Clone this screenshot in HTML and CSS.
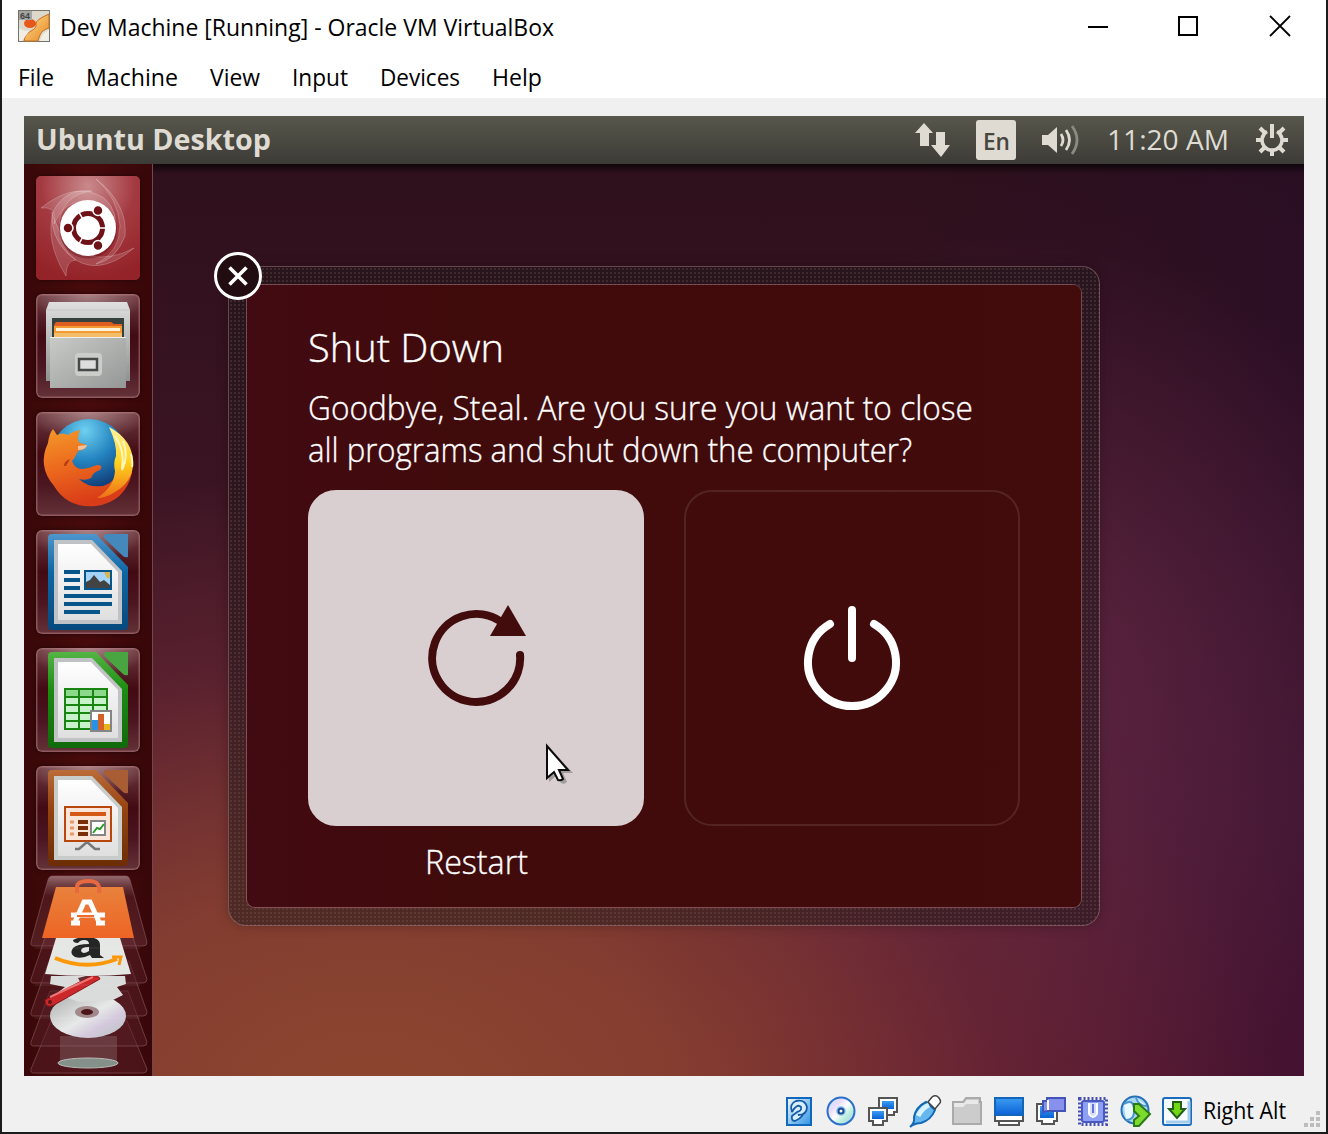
FILE: index.html
```html
<!DOCTYPE html>
<html lang="en">
<head>
<meta charset="utf-8">
<title>Dev Machine [Running] - Oracle VM VirtualBox</title>
<link rel="stylesheet" href="styles.css">
</head>
<body>
<div class="window">
  <header class="titlebar">
    <svg class="app-icon" width="32" height="32" viewBox="0 0 32 32">
      <defs><linearGradient id="pipe" x1="0" y1="0" x2="1" y2="1"><stop offset="0" stop-color="#ffe09a"/><stop offset="1" stop-color="#e8861c"/></linearGradient></defs>
      <rect x=".5" y=".5" width="31" height="31" fill="#ddd8cc" stroke="#77736a"/>
      <path d="M31 4v14q-7 2-9 7t-2 6H6q1-7 7-10t5-7 13-10z" fill="url(#pipe)" stroke="#c07420"/>
      <path d="M22 31q1-8 9-11v11z" fill="#f1eee6"/>
      <path d="M1 18q5 4 11 2l-8 11H1z" fill="#f1eee6"/>
      <ellipse cx="12" cy="13.500" rx="6" ry="4.500" fill="#e8571a"/>
      <rect x="1" y="1" width="13" height="9" fill="#a5a5a2"/>
      <text x="2" y="9" class="badge">64</text>
    </svg>
    <svg class="title segoe" width="500" height="40"><text x="1" y="26" textLength="494" lengthAdjust="spacingAndGlyphs">Dev Machine [Running] - Oracle VM VirtualBox</text></svg>
    <svg class="controls" width="204" height="24" viewBox="0 0 204 24" fill="none" stroke="#000" stroke-width="2">
      <path d="M2 13h20M93 3h18v18H93z"/><path d="M184 2l20 20M204 2l-20 20" stroke-width="1.800"/>
    </svg>
  </header>
  <nav class="menubar segoe">
    <svg width="36" height="38"><text x="0" y="26" textLength="36" lengthAdjust="spacingAndGlyphs">File</text></svg>
    <svg width="92" height="38"><text x="0" y="26" textLength="92" lengthAdjust="spacingAndGlyphs">Machine</text></svg>
    <svg width="50" height="38"><text x="0" y="26" textLength="50" lengthAdjust="spacingAndGlyphs">View</text></svg>
    <svg width="56" height="38"><text x="0" y="26" textLength="56" lengthAdjust="spacingAndGlyphs">Input</text></svg>
    <svg width="80" height="38"><text x="0" y="26" textLength="80" lengthAdjust="spacingAndGlyphs">Devices</text></svg>
    <svg width="50" height="38"><text x="0" y="26" textLength="50" lengthAdjust="spacingAndGlyphs">Help</text></svg>
  </nav>

  <main class="guest">
    <div class="panel">
      <svg class="panel-title" width="240" height="48"><text x="0" y="34" textLength="235" lengthAdjust="spacingAndGlyphs">Ubuntu Desktop</text></svg>
      <svg class="net" width="36" height="34" viewBox="0 0 36 34" fill="#dfdbd2"><path d="M9 0L18 10h-4v13H5V10H0zM21 9h9v13h5L26 34 16 22h5z"/></svg>
      <svg class="lang" width="40" height="40"><rect width="40" height="40" rx="3"/><text x="7" y="30" textLength="27" lengthAdjust="spacingAndGlyphs">En</text></svg>
      <svg class="sound" width="40" height="34" viewBox="0 0 40 34" fill="none" stroke="#dfdbd2" stroke-width="2.800"><path d="M0 12h6l9-8v26l-9-8H0z" fill="#dfdbd2" stroke="none"/><path d="M19 11q4 6 0 12M24 7q7 10 0 20"/><path d="M30 3q10 14 0 28" stroke="#8c8b82"/></svg>
      <svg class="clock" width="124" height="48"><text x="0" y="34" textLength="122" lengthAdjust="spacingAndGlyphs">11:20 AM</text></svg>
      <svg class="gear" width="34" height="34" viewBox="-17 -17 34 34" fill="none" stroke="#dfdbd2"><path d="M-5-8.500A10 10 0 1 0 5-8.500" stroke-width="3.600"/><path d="M0-16V-2M0 10v6M10 0h6M-10 0h-6M7 7l5 5M-7 7l-5 5M7-7l5-5M-7-7l-5-5" stroke-width="4"/></svg>
    </div>
    <div class="desktop">
      <aside class="launcher">
        <div class="tile tile-dash">
          <svg viewBox="0 0 104 104">
            <defs><radialGradient id="dash" cx=".5" cy=".1" r=".9"><stop offset="0" stop-color="#c98a8c"/><stop offset=".5" stop-color="#a43a41"/><stop offset="1" stop-color="#932329"/></radialGradient></defs>
            <rect width="104" height="104" rx="5" fill="url(#dash)"/>
            <g fill="#fff" fill-opacity=".14" stroke="#fff" stroke-opacity=".22">
              <path d="M5 32Q40 4 68 22 84 36 78 60 70 30 44 26 28 26 18 48 22 30 5 32z"/>
              <path d="M60 3Q92 28 89 60 80 84 60 88 84 76 84 50 82 22 60 3z"/>
              <path d="M98 72Q60 104 32 78 14 60 16 36 26 72 54 80 76 84 98 72z"/>
              <path d="M30 100Q8 64 18 34 30 12 56 15 30 18 24 42 20 70 40 84 30 84 30 100z"/>
            </g>
            <circle cx="52" cy="53.500" r="29" fill="#5d1015" opacity=".4"/><circle cx="52" cy="52" r="28" fill="#fff"/>
            <circle cx="52" cy="52" r="14.500" fill="none" stroke="#6f1218" stroke-width="5"/>
            <path d="M52 52L61 36.500M52 52H34M52 52L61 67.500" transform="rotate(60 52 52)" stroke="#fff" stroke-width="1.500"/>
            <g fill="#6f1218" stroke="#fff" stroke-width="1.500"><circle cx="62" cy="34.500" r="5"/><circle cx="32" cy="52" r="5"/><circle cx="62" cy="69.500" r="5"/></g>
          </svg>
        </div>
        <div class="tile">
          <svg viewBox="0 0 104 104">
            <defs><linearGradient id="cab" x1="0" y1="0" x2="0" y2="1"><stop offset="0" stop-color="#dedfde"/><stop offset="1" stop-color="#8f9290"/></linearGradient><linearGradient id="drawer" x1="0" y1="0" x2="1" y2="1"><stop offset="0" stop-color="#c9cbc9"/><stop offset="1" stop-color="#949795"/></linearGradient></defs>
            <path d="M13 8h78l3 8v71H10V16z" fill="url(#cab)"/><path d="M10 16h84" stroke="#c4c6c5"/><rect x="16" y="24" width="72" height="20" fill="#35403f"/>
            <path d="M20 28h55l3 2h8v14H18V31z" fill="#dd5e20"/><path d="M18 32h68v12H18z" fill="#f39a32"/><path d="M20 34h64v3H20z" fill="#fff2dc"/><path d="M18 39h68v5H18z" fill="#f3bd6a"/>
            <path d="M14 43h76v51H14z" fill="url(#drawer)"/><path d="M14 43.500h76" stroke="#eee"/>
            <rect x="39" y="59" width="27" height="23" rx="4" fill="#cbcdcb"/><rect x="43" y="65" width="18" height="11" fill="#ddd" stroke="#454a49" stroke-width="2.500"/>
          </svg>
        </div>
        <div class="tile">
          <svg viewBox="0 0 104 104">
            <defs><radialGradient id="globe" cx=".45" cy=".15" r=".85"><stop offset="0" stop-color="#6fd0f1"/><stop offset=".45" stop-color="#2384c0"/><stop offset="1" stop-color="#0b2863"/></radialGradient><linearGradient id="fox" x1="0" y1="0" x2=".3" y2="1"><stop offset="0" stop-color="#f49a28"/><stop offset=".5" stop-color="#ec6a1e"/><stop offset="1" stop-color="#d93c18"/></linearGradient><linearGradient id="tail" x1="0" y1="0" x2="0" y2="1"><stop offset="0" stop-color="#fff3a0"/><stop offset=".5" stop-color="#ffd21e"/><stop offset="1" stop-color="#ee7119"/></linearGradient></defs>
            <circle cx="53" cy="46" r="39" fill="url(#globe)"/>
            <path d="M17 17l4 6q6-3 11 0 4-3 12-5-2 5-2 10l2 3 7 2q-1 5-9 6-3 7-6 10 3 8 10 8 8-1 15-4 7 0 3 5-7 2-9 8-5 3-12 1 9 9 24 7 16-5 17-24 12-2 12 11-7 29-36 33-28 3-42-20Q1 54 12 31q1-9 5-14z" fill="url(#fox)"/>
            <path d="M73 15q25 13 24 38-1 17-18 27-9 6-18 6 17-11 18-27-2-8 1-15 1-12-7-29z" fill="url(#tail)"/>
            <path d="M79 24q10 14 7 34 7-14 1-29M95 42q2 9 1 13" fill="none" stroke="#fff7bd" stroke-width="2"/>
            <path d="M42 34l9-1q-1 5-9 5z" fill="#efc19f"/><path d="M28 54q0-5 6-7l-4 7z" fill="#b63b17"/>
          </svg>
        </div>
        <div class="tile">
          <svg viewBox="0 0 104 104">
            <defs><linearGradient id="blue" x1="0" y1="0" x2="0" y2="1"><stop offset="0" stop-color="#4e96cc"/><stop offset=".4" stop-color="#0d66a5"/><stop offset="1" stop-color="#064a7d"/></linearGradient><linearGradient id="page" x1="0" y1="0" x2="0" y2="1"><stop offset="0" stop-color="#fff"/><stop offset="1" stop-color="#dfdfe0"/></linearGradient></defs>
            <path d="M16 4h44l32 33v59q0 4-4 4H16q-4 0-4-4V8q0-4 4-4z" fill="url(#blue)"/><path d="M70 4h22v23q-3 1-5-1L68 8q-1-3 2-4z" fill="#4588bb"/>
            <path d="M18 10h38l30 31v53H18z" fill="#c1c2c5"/><path d="M22 14h33l27 28v48H22z" fill="url(#page)"/>
            <path d="M28 42h16M28 50h16M28 58h16M28 66h48M28 74h48M28 82h36" stroke="#07568b" stroke-width="4"/>
            <rect x="49" y="41" width="26" height="18" fill="#a3d3f7" stroke="#07568b" stroke-width="2"/><path d="M68 42h6v6h-3z" fill="#d7b550"/><path d="M50 58v-6l4-2 4-5 6 7 4-2 6 5v3z" fill="#434343"/>
          </svg>
        </div>
        <div class="tile">
          <svg viewBox="0 0 104 104">
            <defs><linearGradient id="green" x1="0" y1="0" x2="0" y2="1"><stop offset="0" stop-color="#54b444"/><stop offset=".4" stop-color="#1a8d10"/><stop offset="1" stop-color="#106a0b"/></linearGradient></defs>
            <path d="M16 4h44l32 33v59q0 4-4 4H16q-4 0-4-4V8q0-4 4-4z" fill="url(#green)"/><path d="M70 4h22v23q-3 1-5-1L68 8q-1-3 2-4z" fill="#49a541"/>
            <path d="M18 10h38l30 31v53H18z" fill="#c1c2c5"/><path d="M22 14h33l27 28v48H22z" fill="url(#page)"/>
            <path d="M29 41h42v40H29z" fill="#c8f2ca"/><path d="M29 41h42v8H29z" fill="#8cd98b"/><path d="M29 41h42v40H29zM29 49h42M29 57h42M29 65h42M29 73h42M43 41v40M57 41v40" fill="none" stroke="#188510" stroke-width="2"/>
            <rect x="55" y="63" width="20" height="20" fill="#fff" stroke="#858585" stroke-width="2"/><path d="M56 72h6v10h-6z" fill="#2692e4"/><path d="M62 66h6v16h-6z" fill="#d66029"/><path d="M68 76h6v6h-6z" fill="#e7b41e"/>
          </svg>
        </div>
        <div class="tile">
          <svg viewBox="0 0 104 104">
            <defs><linearGradient id="brown" x1="0" y1="0" x2="0" y2="1"><stop offset="0" stop-color="#bb6c39"/><stop offset=".4" stop-color="#964411"/><stop offset="1" stop-color="#6c2d05"/></linearGradient></defs>
            <path d="M16 4h44l32 33v59q0 4-4 4H16q-4 0-4-4V8q0-4 4-4z" fill="url(#brown)"/><path d="M70 4h22v23q-3 1-5-1L68 8q-1-3 2-4z" fill="#a85d34"/>
            <path d="M18 10h38l30 31v53H18z" fill="#c8cccb"/><path d="M22 14h33l27 28v48H22z" fill="url(#page)"/>
            <rect x="29" y="41" width="46" height="34" fill="#fbe5d9" stroke="#b9470d" stroke-width="2"/><path d="M34 48h36" stroke="#d45914" stroke-width="4"/>
            <path d="M34 56h4M34 62h4M34 68h4" stroke="#e59b6c" stroke-width="3"/><path d="M42 56h10M42 62h10M42 68h10" stroke="#7a2e08" stroke-width="4"/>
            <rect x="55" y="55" width="14" height="14" fill="#fff" stroke="#858585" stroke-width="2"/><path d="M57 67l4-5 3 1 4-5" fill="none" stroke="#2b9a29" stroke-width="2"/><path d="M51 76l-8 7h-4M51 76l8 7h5" fill="none" stroke="#777" stroke-width="2.500"/>
          </svg>
        </div>
        <svg class="stack" width="128" height="200" viewBox="0 0 128 200">
          <defs><linearGradient id="bag" x1="0" y1="0" x2="0" y2="1"><stop offset="0" stop-color="#e8823c"/><stop offset="1" stop-color="#ee6424"/></linearGradient><linearGradient id="disc" x1="0" y1="0" x2="1" y2="1"><stop offset="0" stop-color="#a9adab"/><stop offset=".5" stop-color="#e7e9e8"/><stop offset=".7" stop-color="#d4c9dd"/><stop offset="1" stop-color="#b6c4be"/></linearGradient><linearGradient id="sheen" x1="0" y1="0" x2="0" y2="1"><stop offset="0" stop-color="#b08c90" stop-opacity=".75"/><stop offset=".3" stop-color="#6b3038" stop-opacity=".35"/><stop offset="1" stop-color="#8b5058" stop-opacity=".3"/></linearGradient></defs>
          <g fill="#572028" fill-opacity=".5" stroke="#8d5a60" stroke-opacity=".6"><path d="M27 145h76l20 48q0 4-4 4H10q-4 0-3-4z"/><path d="M26 115h78l19 51q0 4-4 4H10q-4 0-3-4z"/><path d="M25 85h80l18 51q0 4-4 4H10q-4 0-3-4z"/><path d="M25 50h80l18 53q0 4-4 4H10q-4 0-3-4z"/><path d="M28 0h74q3 0 4 4l17 62q0 4-4 4H10q-4 0-3-4L24 4q1-4 4-4z" fill="url(#sheen)" fill-opacity="1"/></g>
          <path d="M36 160h57v27q-28 8-57 0z" fill="#8d6c6d" opacity=".4"/><ellipse cx="64" cy="187" rx="30" ry="5" fill="#85908a" stroke="#b9bdb9"/>
          <ellipse cx="64" cy="140" rx="38" ry="22" fill="url(#disc)"/><ellipse cx="63" cy="136" rx="12" ry="6" fill="#a2898b"/><ellipse cx="63" cy="136" rx="6" ry="3" fill="#4c1519"/>
          <path d="M27 100h74l1 8-9 3 6 8-10 5-34 2-23-8 9-7-15-3z" fill="#d9dcda"/><path d="M54 102l12-3 5 4-13 6z" fill="#652d31"/>
          <path d="M21 124l46-24q8-1 9 3L30 129q-9 4-9-5z" fill="#ca282b" stroke="#8b171b"/><path d="M26 121l43-20" stroke="#ed7471" stroke-width="2"/><circle cx="26" cy="126" r="2" fill="#641518"/>
          <path d="M32 62h64l11 36q-42 4-86 0z" fill="#e5e7e5"/><path d="M49 64q5-3 13-3 14 0 14 8v10l4 3h-12l-2-3q-8 4-15 2-6-3-2-9 4-4 16-4 0-4-5-4-4 0-6 3-5 0-5-3zM65 71q-8 0-8 4 2 4 8 0z" fill="#252525"/><path d="M31 82q31 13 62 1" fill="none" stroke="#fa980a" stroke-width="4"/><path d="M88 81h9l-2 8" fill="none" stroke="#fa980a" stroke-width="3"/>
          <path d="M32 11h67l11 51H18z" fill="url(#bag)"/><path d="M53 17v-6q0-6 12-6t10 12" fill="none" stroke="#e76940" stroke-width="4"/>
          <path d="M51 46l9-20h6l9 20M47 39h34M47 47h9M72 47h9" fill="none" stroke="#fff" stroke-width="5"/><path d="M53 40h17" stroke="#ed6b2d" stroke-width="2"/>
          <path d="M11 72h105M11 109h105M11 142h105" stroke="#fff" opacity=".1"/>
        </svg>
      </aside>

      <section class="dialog">
        <button class="close" aria-label="Close"><svg width="48" height="48" viewBox="0 0 48 48"><circle cx="24" cy="24" r="22.500" fill="#210d11" stroke="#fff" stroke-width="3"/><path d="M15.500 15.500l17 17M32.500 15.500l-17 17" stroke="#fff" stroke-width="3.600"/></svg></button>
        <div class="dialog-body">
          <svg class="heading" width="712" height="56"><text x="0" y="34" textLength="196" lengthAdjust="spacingAndGlyphs">Shut Down</text></svg>
          <svg class="message" width="712" height="106"><text x="0" y="36" textLength="665" lengthAdjust="spacingAndGlyphs">Goodbye, Steal. Are you sure you want to close</text><text x="0" y="78" textLength="604" lengthAdjust="spacingAndGlyphs">all programs and shut down the computer?</text></svg>
          <div class="choices">
            <div class="choice choice-active"><svg width="104" height="108" viewBox="-52 -54 104 108"><path d="M44-4A44 44 0 1 1 24-37" fill="none" stroke="#420b0c" stroke-width="8"/><circle cx="44" cy="-3" r="4" fill="#420b0c"/><path d="M32-53L50-22H14z" fill="#420b0c"/></svg></div>
            <div class="choice"><svg width="104" height="112" viewBox="-52 -60 104 112" fill="none" stroke="#fff" stroke-width="8" stroke-linecap="round"><path d="M-22-38A44 44 0 1 0 22-38M0-52V-4"/></svg></div>
          </div>
          <svg class="caption" width="336" height="60"><text x="117" y="48" textLength="103" lengthAdjust="spacingAndGlyphs">Restart</text></svg>
        </div>
      </section>
      <svg class="cursor" width="30" height="44" viewBox="0 0 30 44"><path d="M2 3v35l8-7 4 8q3 2 6-1l-4-9h10z" fill="#000" opacity=".25" transform="translate(2 2)"/><path d="M2 4v32l7-6 4 8q3 1 5-1l-4-9h9z" fill="#fff" stroke="#0b0b0b" stroke-width="2"/></svg>
    </div>
  </main>

  <footer class="statusbar">
    <svg height="32" viewBox="0 0 28 32"><defs><linearGradient id="sb" x1="0" y1="0" x2="1" y2="1"><stop offset="0" stop-color="#f4fbff"/><stop offset="1" stop-color="#2d94e5"/></linearGradient><linearGradient id="screen" x1="0" y1="0" x2="0" y2="1"><stop offset="0" stop-color="#3c9cf2"/><stop offset="1" stop-color="#0a62d6"/></linearGradient></defs><rect x="2" y="3" width="24" height="27" fill="url(#sb)" stroke="#1268bd" stroke-width="2"/><path d="M7 17q-3-8 4-11 9-2 11 6 0 8-9 8M7 17q5-9 9-5 1 4-4 5l-5 4q-1 5 3 5 5-2 8-6" fill="#d6efff" stroke="#175ba6" stroke-width="1.800"/></svg>
    <svg height="32" viewBox="0 0 30 32"><defs><linearGradient id="cd" x1="0" y1="0" x2="1" y2="1"><stop offset="0" stop-color="#bdeafe"/><stop offset=".3" stop-color="#eadcfb"/><stop offset=".5" stop-color="#fff"/><stop offset=".7" stop-color="#b9eedb"/><stop offset="1" stop-color="#b2c9f8"/></linearGradient></defs><circle cx="15" cy="16" r="13.500" fill="url(#cd)" stroke="#2a6fca" stroke-width="2"/><circle cx="15" cy="16" r="5" fill="#9bc9f2"/><circle cx="15" cy="16" r="2.500" fill="#fff" stroke="#184b91" stroke-width="2"/></svg>
    <svg height="32" viewBox="0 0 30 32" fill="#fff" stroke="#555" stroke-width="2"><path d="M11 3h18v14h-3v3h-12v-3h-3z"/><path d="M14 6h12v8H14z" fill="url(#screen)" stroke="none"/><path d="M1 13h18v13h-4v4H5v-4H1z"/><path d="M4 16h12v8H4z" fill="url(#screen)" stroke="none"/></svg>
    <svg height="34" viewBox="0 0 32 34"><path d="M1 33q5-4 4-10Q7 13 17 8l9 8q-4 10-14 13-6 0-11 4z" fill="#67b7ef" stroke="#1268b4" stroke-width="2"/><path d="M9 22q4-8 11-11" stroke="#d8f2ff" stroke-width="5" fill="none"/><path d="M19 8l4-5q4-3 7 1t0 6l-4 5z" fill="#fff" stroke="#444" stroke-width="1.500"/></svg>
    <svg height="32" viewBox="0 0 30 32"><path d="M1 7h10l3-4h14v4h1v22H1z" fill="#ccc" stroke="#aaa" stroke-width="2"/><path d="M2 8h10l3-3h11v4H14l-3 3H2z" fill="#e9e9e9"/></svg>
    <svg height="32" viewBox="0 0 32 32"><path d="M6 25h20v5H6z" fill="#fff" stroke="#555" stroke-width="2"/><path d="M2 18h28v8H2z" fill="#fff" stroke="#555" stroke-width="2"/><path d="M2 3h28v17H2z" fill="url(#screen)" stroke="#1265b8" stroke-width="2"/></svg>
    <svg height="32" viewBox="0 0 32 32"><path d="M2 9h20v17h-3v3H7v-3H2z" fill="#fff" stroke="#555" stroke-width="2"/><path d="M5 11h14v12H5z" fill="url(#screen)"/><path d="M12 3h18v13H13l-5 1V6h4z" fill="#8790ed" stroke="#4254b8" stroke-width="2"/><path d="M13 5v10" stroke="#fff" stroke-width="2"/></svg>
    <svg height="32" viewBox="0 0 32 32"><rect x="2.500" y="3.500" width="27" height="26" fill="none" stroke="#4550b2" stroke-width="3" stroke-dasharray="2 2"/><rect x="5" y="6" width="22" height="21" rx="2" fill="#8da0f4" stroke="#4858be" stroke-width="2"/><path d="M12 8v11q4 6 8 0V8" fill="#d5ddff" stroke="#fff" stroke-width="2"/><path d="M16 9v9" stroke="#6375cd" stroke-width="2"/></svg>
    <svg height="34" viewBox="0 0 32 34"><circle cx="16" cy="16" r="13.500" fill="#a8d9f6" stroke="#2670b8" stroke-width="2"/><path d="M5 10q9-6 10 5t-8 11M17 4q3 8 11 8" fill="#e9f7ff" stroke="#4b94cf" stroke-width="2"/><path d="M20 10l11 10-11 12h-5v-6l5-4-5-5v-7z" fill="#7cdb2b" stroke="#2c7917" stroke-width="2"/></svg>
    <svg height="32" viewBox="0 0 32 32"><rect x="2" y="3" width="28" height="27" rx="2" fill="#f5fbff" stroke="#1b6bbd" stroke-width="2"/><path d="M5 27h23V6" fill="none" stroke="#a6cdeb" stroke-width="3"/><path d="M12 7h8v7h4l-8 9-8-9h4z" fill="#73d614" stroke="#225f18" stroke-width="2"/></svg>
    <svg class="hostkey" height="36"><text x="1" y="26" textLength="83" lengthAdjust="spacingAndGlyphs">Right Alt</text></svg>
    <svg class="grip" height="18" viewBox="0 0 18 18" fill="#bdbdbd"><path d="M13 0h4v4h-4zM13 6h4v4h-4zM13 12h4v4h-4zM7 6h4v4H7zM7 12h4v4H7zM1 12h4v4H1z"/></svg>
  </footer>
</div>
</body>
</html>
```
FILE: styles.css
```css
* { box-sizing: border-box; }
body { margin: 0; font-family: "Open Sans", "Noto Sans", sans-serif; }
svg { display: block; flex: none; overflow: visible; }
.window {
  width: 1328px; height: 1134px; overflow: hidden;
  display: flex; flex-direction: column;
  background: #f0f0f0;
  border: 2px solid #1b1b1b; border-top: 0;
}
.segoe, .hostkey { font-size: 24px; fill: #000; }
.titlebar { height: 60px; background: #fff; display: flex; align-items: flex-start; padding: 10px 36px 0 16px; }
.badge { font: bold 9px "Liberation Sans", sans-serif; fill: #444; }
.title { margin-left: 9px; }
.controls { margin: 4px 0 0 auto; }
.menubar { height: 38px; background: #fff; display: flex; gap: 32px; padding-left: 16px; }

.guest { width: 1280px; height: 960px; margin: 18px 0 0 22px; display: flex; flex-direction: column; }
.panel {
  height: 48px; display: flex; align-items: center; padding: 0 16px 0 12px;
  background: linear-gradient(#57574c, #3c3b37);
}
.panel-title { font-size: 28px; font-weight: 700; fill: #dfdbd2; }
.net { margin-left: auto; }
.lang { margin-left: 25px; fill: #dfdbd2; }
.lang text { fill: #46463f; font-size: 23px; font-weight: 600; }
.sound { margin-left: 26px; }
.clock { margin-left: 25px; fill: #dfdbd2; font-size: 28px; }
.gear { margin: 0 -1px 0 24px; }

.desktop {
  position: relative; flex: 1; display: flex;
  background:
    linear-gradient(rgba(0,0,0,.65), transparent 10px),
    radial-gradient(ellipse 900px 640px at 27% 104%, rgba(142,72,46,.98), rgba(138,67,48,.85) 35%, rgba(120,50,50,.35) 70%, transparent),
    radial-gradient(ellipse 400px 460px at 78% 58%, rgba(104,42,72,.75), transparent),
    linear-gradient(100deg, transparent 62%, rgba(32,10,46,.5)),
    linear-gradient(#2e101c, #3b1423 35%, #541b33 72%, #681b33);
}
.launcher {
  width: 129px; height: 912px; flex: none; display: flex; flex-direction: column;
  padding: 12px 0 0 12px; gap: 14px;
  background: linear-gradient(90deg, #390808, #480b0d 50%, #380709);
  border-right: 1px solid #73474b;
}
.tile {
  width: 104px; height: 104px; flex: none; border-radius: 6px;
  background: radial-gradient(ellipse 60px 30px at 50% 0, rgba(210,180,180,.6), transparent), linear-gradient(#6d3a40, #420b14 40%, #4b1620 70%, #643239);
  box-shadow: inset 0 0 0 1.5px rgba(190,130,135,.5), 0 0 5px rgba(0,0,0,.5);
}
.tile-dash { background: #96252e; }
.stack { margin: -8px 0 0 -12px; }

.dialog {
  position: relative; width: 872px; height: 660px; margin: 102px 0 0 75px; padding: 18px;
  border: 1px solid rgba(200,150,155,.4); border-radius: 18px;
  background: radial-gradient(circle, rgba(150,110,115,.22) 1px, transparent 1.4px) 0 0 / 4px 4px, rgba(30,24,24,.52);
  box-shadow: 0 0 12px rgba(0,0,0,.25);
}
.dialog-body {
  height: 622px; border-radius: 8px; padding: 43px 60px 0 61px;
  background: linear-gradient(90deg, #420a12, #400b0a 30%, #420b0c);
  box-shadow: 0 0 0 1px rgba(190,120,130,.5);
  fill: #fff; font-weight: 300;
}
.dialog-body text { stroke: #fff; stroke-width: .35px; }
.close { position: absolute; left: -15px; top: -15px; width: 48px; height: 48px; padding: 0; border: 0; background: none; }
.heading { font-size: 39px; }
.message { font-size: 33px; }
.caption { font-size: 33px; }
.choices { display: flex; gap: 40px; }
.choice {
  flex: none; width: 336px; height: 336px; border-radius: 28px; border: 2px solid rgba(255,255,255,.1);
  display: flex; align-items: center; justify-content: center;
}
.choice-active { background: #d9cfd0; border-color: #d9cfd0; }
.cursor { position: absolute; left: 521px; top: 578px; }

.statusbar { height: 56px; display: flex; align-items: center; padding: 14px 5px 0 776px; }
.statusbar svg { width: 42px; }
.statusbar .hostkey { width: 86px; margin-left: 4px; }
.statusbar .grip { width: 18px; margin: 18px 0 0 auto; }
```
